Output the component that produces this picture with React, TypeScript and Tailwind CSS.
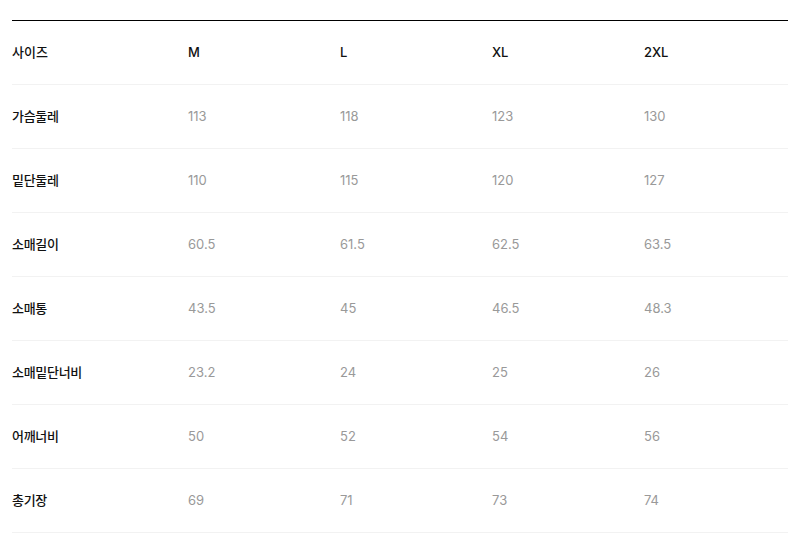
const sizes = ['M', 'L', 'XL', '2XL']

const rows: { label: string; values: string[] }[] = [
  { label: '가슴둘레', values: ['113', '118', '123', '130'] },
  { label: '밑단둘레', values: ['110', '115', '120', '127'] },
  { label: '소매길이', values: ['60.5', '61.5', '62.5', '63.5'] },
  { label: '소매통', values: ['43.5', '45', '46.5', '48.3'] },
  { label: '소매밑단너비', values: ['23.2', '24', '25', '26'] },
  { label: '어깨너비', values: ['50', '52', '54', '56'] },
  { label: '총기장', values: ['69', '71', '73', '74'] },
]

const cols = 'grid grid-cols-[176px_152px_152px_152px_1fr] items-center h-16'

export default function App() {
  return (
    <div className="bg-white w-[799px] h-[545px] pt-5 pl-3 pr-[11px] font-['Inter','Noto_Sans_CJK_KR',sans-serif] text-[13px]">
      <div className="border-t border-black">
        {/* Header */}
        <div className={`${cols} border-b border-[#f2f2f2]`}>
          <div className="font-medium text-[#111]">사이즈</div>
          {sizes.map(s => (
            <div key={s} className="font-medium text-[#111]">
              {s}
            </div>
          ))}
        </div>

        {/* Rows */}
        {rows.map(row => (
          <div key={row.label} className={`${cols} border-b border-[#f2f2f2]`}>
            <div className="font-medium text-[#111] tracking-[-0.3px]">{row.label}</div>
            {row.values.map((v, i) => (
              <div key={i} className="text-[#999]">
                {v}
              </div>
            ))}
          </div>
        ))}
      </div>
    </div>
  )
}
